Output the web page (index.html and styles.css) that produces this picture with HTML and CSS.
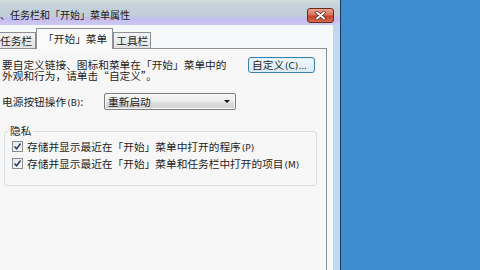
FILE: index.html
```html
<!DOCTYPE html>
<html lang="zh-CN">
<head>
  <meta charset="UTF-8" />
  <title>任务栏和「开始」菜单属性</title>
  <link rel="stylesheet" href="styles.css">
</head>
<body>
  <div class="window">
    <div class="titlebar">
      <span class="title">、任务栏和「开始」菜单属性</span>
      <div class="close">
        <svg width="27" height="15" viewBox="0 0 27 15">
          <path d="M10 4.5 L17 10.5 M17 4.5 L10 10.5" stroke="#5a2418" stroke-width="3.4" stroke-linecap="round" />
          <path d="M10 4.5 L17 10.5 M17 4.5 L10 10.5" stroke="#fff" stroke-width="2" stroke-linecap="round" />
        </svg>
      </div>
    </div>

    <div class="client">
      <div class="tabs">
        <div class="tab first">任务栏</div>
        <div class="tab active">「开始」菜单</div>
        <div class="tab">工具栏</div>
      </div>

      <div class="page">
        <div class="row intro">
          <p class="intro-text">要自定义链接、图标和菜单在「开始」菜单中的<br>外观和行为，请单击“自定义”。</p>
          <div class="btn">自定义<small>(C)...</small></div>
        </div>

        <div class="row power">
          <span class="label">电源按钮操作<small>(B)</small>:</span>
          <div class="combo">
            <span>重新启动</span>
            <span class="arrow"></span>
          </div>
        </div>

        <fieldset class="group">
          <legend>隐私</legend>
          <div class="check">
            <span class="box">
              <svg width="9" height="9" viewBox="0 0 9 9"><path d="M1.5 4.5 L3.6 6.8 L7.6 1.6" fill="none" stroke="#2a3f6b" stroke-width="1.6" /></svg>
            </span>
            <span>存储并显示最近在「开始」菜单中打开的程序<small>(P)</small></span>
          </div>
          <div class="check">
            <span class="box">
              <svg width="9" height="9" viewBox="0 0 9 9"><path d="M1.5 4.5 L3.6 6.8 L7.6 1.6" fill="none" stroke="#2a3f6b" stroke-width="1.6" /></svg>
            </span>
            <span>存储并显示最近在「开始」菜单和任务栏中打开的项目<small>(M)</small></span>
          </div>
        </fieldset>
      </div>
    </div>
  </div>
</body>
</html>
```

FILE: styles.css
```css
html, body {
  margin: 0;
  padding: 0;
}
body {
  width: 480px;
  height: 270px;
  overflow: hidden;
  background: #3d8dd0;
  font-family: "Noto Sans CJK SC", "Noto Sans", sans-serif;
  font-size: 10.7px;
  color: #1e1e1e;
}
.window {
  width: 340px;
  height: 270px;
  border-right: 1px solid #1d3a5a;
  background: linear-gradient(to right, #eef5fb 0, #c4def5 2px, #bcd8f2 100%);
}
.titlebar {
  height: 25px;
  display: flex;
  align-items: flex-start;
  justify-content: space-between;
  background: linear-gradient(to bottom, #d3ddd8 0, #c5d2da 5px, #c1cdd9 16px, #c3bdee 18px, #cdc7f3 25px);
  border-top-right-radius: 6px;
}
.title {
  font-size: 10px;
  line-height: 12px;
  margin-top: 9px;
  color: #1a1a1a;
}
.close {
  width: 25px;
  height: 13px;
  margin: 8px 6px 0 0;
  border: 1px solid #6a2b1f;
  border-radius: 3px;
  background: linear-gradient(to bottom, #eba28e 0, #d8725a 45%, #c2412a 55%, #d26a50 100%);
  display: flex;
  align-items: center;
  justify-content: center;
  overflow: hidden;
}
.close svg {
  flex: none;
}
.client {
  width: 333px;
  height: 245px;
  background: #f6f8f9;
  padding-top: 4px;
  box-sizing: border-box;
}
.tabs {
  display: flex;
  align-items: flex-end;
  height: 20px;
  margin-bottom: -1px;
}
.tab {
  height: 15px;
  line-height: 15px;
  padding: 0 2px;
  margin-bottom: 1px;
  border: 1px solid #8d9096;
  border-bottom: none;
  background: linear-gradient(to bottom, #f4f4f4, #e2e2e2);
  white-space: nowrap;
}
.tab.first {
  margin-left: -5px;
  padding: 0 3px 0 4px;
}
.tab.active {
  position: relative;
  z-index: 1;
  height: 20px;
  line-height: 19px;
  margin: 0 0 0 0;
  padding: 0 5px 0 6px;
  background: #fbfbfb;
}
.page {
  margin: 0 6px 0 -6px;
  height: 222px;
  border: 1px solid #8d9096;
  border-bottom: none;
  background: #f7f7f7;
  padding: 8px 11px 0 7px;
}
.row {
  display: flex;
  align-items: flex-start;
}
.intro {
  justify-content: space-between;
}
.intro-text {
  margin: 2px 0 0 0;
  line-height: 11px;
}
small {
  font-size: 9px;
  font-family: "DejaVu Sans", sans-serif;
  margin-left: 1px;
}
.btn {
  width: 62px;
  height: 14px;
  line-height: 14px;
  padding-left: 3px;
  border: 1px solid #3c7fb1;
  border-radius: 3px;
  background: linear-gradient(to bottom, #f2f9fe 0, #e4f1fb 50%, #d6eaf8 100%);
  box-shadow: inset 0 0 0 1px #d9effc;
  white-space: nowrap;
}
.power {
  margin-top: 12px;
  align-items: center;
}
.label {
  width: 102px;
}
.combo {
  width: 127px;
  height: 15px;
  padding: 0 0 0 3px;
  display: flex;
  align-items: center;
  justify-content: space-between;
  border: 1px solid #7d7d7d;
  border-radius: 2px;
  background: linear-gradient(to bottom, #f4f4f4 0, #ececec 50%, #dedede 51%, #d3d3d3 100%);
  box-shadow: inset 0 0 0 1px #fafafa;
}
.arrow {
  width: 0;
  height: 0;
  margin-right: 5px;
  border-left: 3px solid transparent;
  border-right: 3px solid transparent;
  border-top: 3px solid #111;
}
.group {
  margin: 15px -2px 0 2px;
  padding: 1px 7px 13px;
  border: 1px solid #d6dfe4;
  border-radius: 3px;
}
.group legend {
  padding: 0 2px;
  margin-left: -4px;
  line-height: 12px;
}
.check {
  display: flex;
  align-items: center;
  gap: 4px;
  height: 17px;
  white-space: nowrap;
}
.box {
  width: 9px;
  height: 9px;
  border: 1px solid #8a8c8f;
  background: linear-gradient(to bottom right, #e6e9ec, #fbfbfb);
  display: flex;
  align-items: center;
  justify-content: center;
}
```
